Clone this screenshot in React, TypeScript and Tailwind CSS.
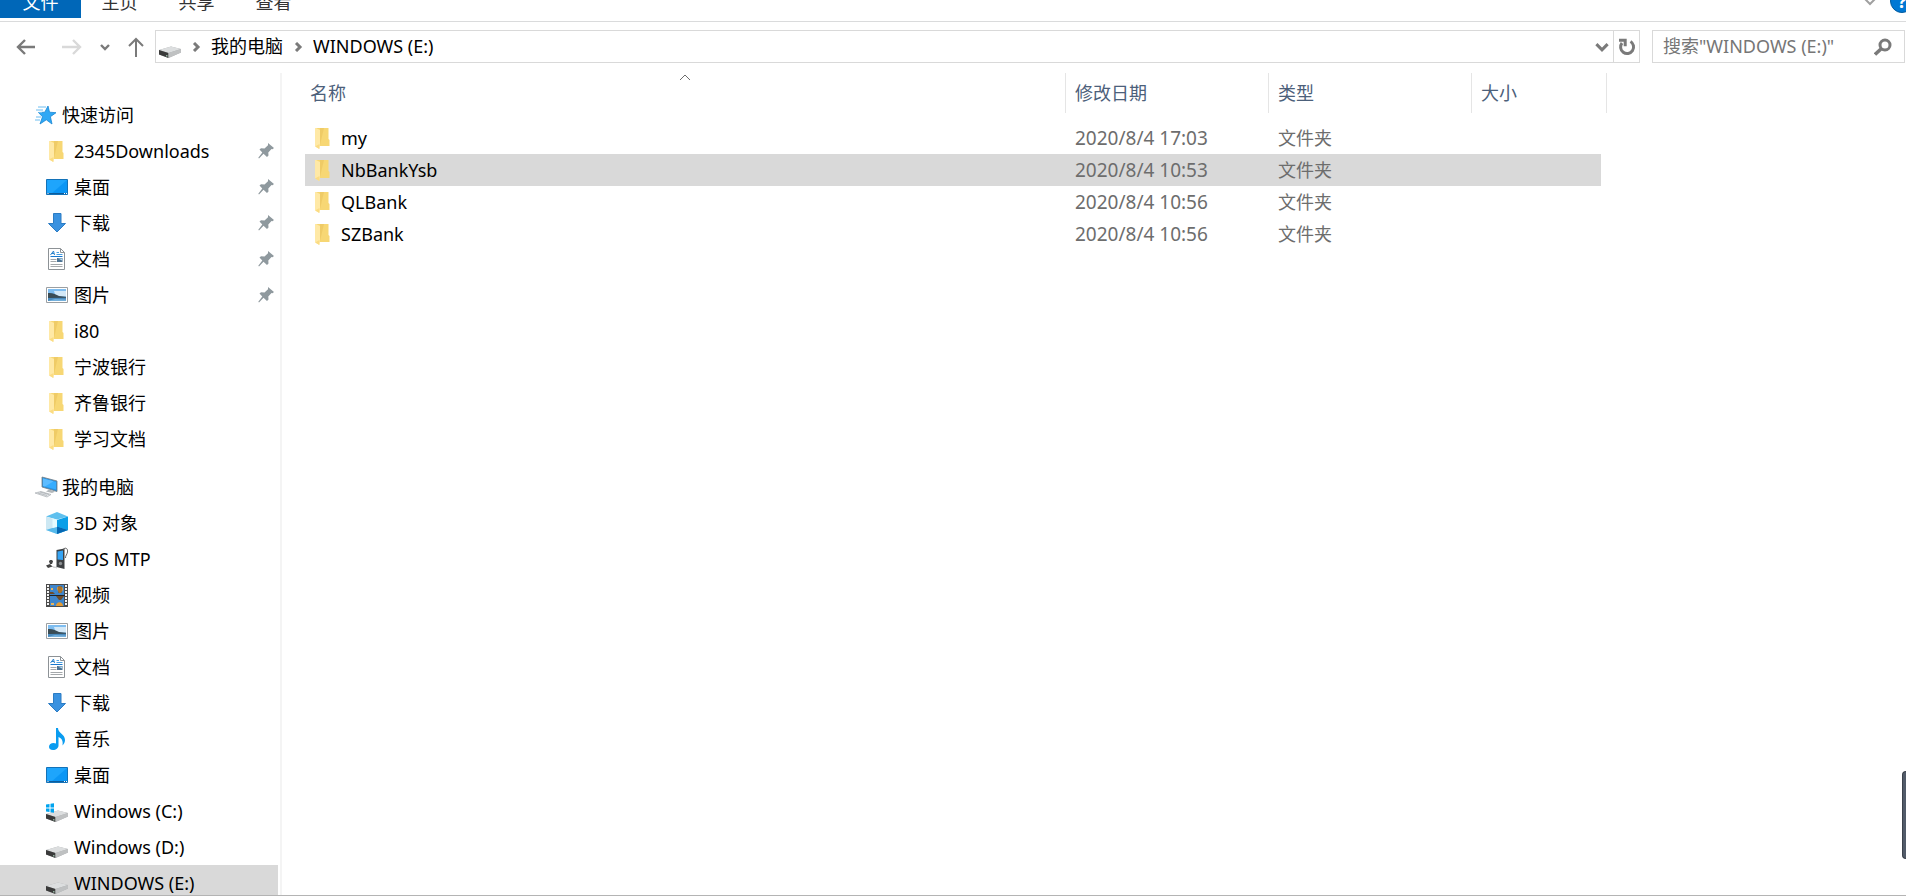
import type { ReactNode } from "react";

type IconName =
  | "star"
  | "folder"
  | "desktop"
  | "download"
  | "document"
  | "picture"
  | "computer"
  | "cube"
  | "player"
  | "video"
  | "music"
  | "drive"
  | "system";

type NavItem = { label: string; icon: IconName; pinned?: boolean; active?: boolean };
type NavGroup = { label: string; icon: IconName; items: NavItem[] };

const groups: NavGroup[] = [
  {
    label: "快速访问",
    icon: "star",
    items: [
      { label: "2345Downloads", icon: "folder", pinned: true },
      { label: "桌面", icon: "desktop", pinned: true },
      { label: "下载", icon: "download", pinned: true },
      { label: "文档", icon: "document", pinned: true },
      { label: "图片", icon: "picture", pinned: true },
      { label: "i80", icon: "folder" },
      { label: "宁波银行", icon: "folder" },
      { label: "齐鲁银行", icon: "folder" },
      { label: "学习文档", icon: "folder" },
    ],
  },
  {
    label: "我的电脑",
    icon: "computer",
    items: [
      { label: "3D 对象", icon: "cube" },
      { label: "POS MTP", icon: "player" },
      { label: "视频", icon: "video" },
      { label: "图片", icon: "picture" },
      { label: "文档", icon: "document" },
      { label: "下载", icon: "download" },
      { label: "音乐", icon: "music" },
      { label: "桌面", icon: "desktop" },
      { label: "Windows (C:)", icon: "system" },
      { label: "Windows (D:)", icon: "drive" },
      { label: "WINDOWS (E:)", icon: "drive", active: true },
    ],
  },
];

const files = [
  { name: "my", date: "2020/8/4 17:03", type: "文件夹" },
  { name: "NbBankYsb", date: "2020/8/4 10:53", type: "文件夹", selected: true },
  { name: "QLBank", date: "2020/8/4 10:56", type: "文件夹" },
  { name: "SZBank", date: "2020/8/4 10:56", type: "文件夹" },
];

const driveBody = (
  <>
    <path d="M0 14 12 10.5 22 13v3.500L9.500 22 0 18.500z" fill="#a9abad" />
    <path d="M0 14 12 10.500 22 13 9.500 17z" fill="#dcdedf" />
    <path d="M0 14 9.500 17v5L0 18.500z" fill="#3a3a3a" />
    <path d="M9.500 17 22 13v3.500L9.500 22z" fill="#bfc1c2" />
    <path d="M7 19h1.500v1.500H7z" fill="#8fae9b" />
  </>
);

// All drawn on a 22x22 grid
const shapes: Record<IconName, ReactNode> = {
  star: (
    <>
      <path
        d="m13 2 1.500 6.200 6.500.5-5.600 4 1.600 7.300-5.700-4.200-6.300 4.200 2.500-7.200-4-4.300 6.300-.3z"
        fill="#2fa8f5"
        stroke="#1685d3"
        strokeWidth=".8"
      />
      <path d="M3 3h8M1 6h7M4 8.500h3M1 13h5M0 16h5" stroke="#6dbdf0" strokeWidth="1" />
    </>
  ),
  folder: (
    <>
      <path d="M4 1h12.500v11l1 1v6H7z" fill="#f7d774" />
      <path d="M8 1h4l-4 17z" fill="#efcb66" />
      <path d="M3 1h1l4 2v15l-1 4-4-3z" fill="#ffe9a6" />
      <path d="M7.500 17v5L3 19.500z" fill="#fbdc83" />
    </>
  ),
  desktop: (
    <>
      <path d="M.5 3.500h21v15H.5z" fill="#1ea5fc" stroke="#1372b8" />
      <path d="M21 4v14H5z" fill="#0b96f5" />
      <path d="M1 17.500h20" stroke="#0c5c9c" />
      <path d="M1.500 17.500h1M18 17.500h1m1 0h1" stroke="#fff" />
    </>
  ),
  download: <path d="M7.500 1.500h7.500v10h4.500L11 20 2.500 11.500h5z" fill="#3a92e0" stroke="#2c7cc4" />,
  document: (
    <>
      <path d="M2.500.5h12l4 4v17h-16z" fill="#fff" stroke="#8d9296" />
      <path d="M14.500.5v4h4" fill="none" stroke="#8d9296" />
      <path d="m4.500 7 3-4 1 4M5.500 5.500H8" fill="none" stroke="#2b83cc" />
      <path d="M10.500 4.500h2.500M10.500 6.500h6" stroke="#4ba0e2" />
      <path d="M4.500 8.500h12" stroke="#1778cf" />
      <path d="M4.500 11.500h6m-6 2h6m-6 3h12m-12 2h12" stroke="#a4a8ab" />
      <path d="M11 10h5.500v4H11z" fill="#4d7393" />
      <path d="m12 10.500 4 2v-2z" fill="#b5dcf5" />
    </>
  ),
  picture: (
    <>
      <path d="M.5 3.500h21v15H.5z" fill="#fff" stroke="#9b9fa2" />
      <path d="M2 5h18v8H2z" fill="#7ebdf0" />
      <path d="M8 7h12v6H10z" fill="#d3e8f7" />
      <path d="M2 12.500h18V17H2z" fill="#4a8abd" />
      <path d="M2 9c4-.5 8 1 11 3l7 1v.8L2 14z" fill="#3a4c55" />
      <path d="m2 17 7-2 11 .5V17z" fill="#74b0dc" />
    </>
  ),
  computer: (
    <>
      <path d="m7 1 15 4v10.500L7 11z" fill="#2b91de" stroke="#727b82" strokeWidth=".8" />
      <path d="m8 2.500 13 3.500v7.500L8 10z" fill="#36adff" />
      <path d="M8 2.500 18.500 5.300 10 10.500 8 10z" fill="#5dbcff" />
      <path d="m14 13.500 4 1.200 2 1-3 1.300-6-1.500z" fill="#b3b8bb" />
      <path d="m0 17 6-1.500L16 18.500l-4 2.500z" fill="#e3e6e8" stroke="#9fa5a9" strokeWidth=".6" />
      <path d="m3 17 9 2.500M5 16l9 2.500" stroke="#9fa5a9" strokeWidth=".6" />
    </>
  ),
  cube: (
    <>
      <path d="m0 4.500 11-4.500 11 4.500-11 3z" fill="#5fc0ee" />
      <path d="M0 4.500 11 8v14L0 18z" fill="#cde8f3" />
      <path d="M22 4.500 11 8v14l11-4z" fill="#0b9fe8" />
      <path d="m0 18 11-3.500L22 18l-11 4z" fill="#55b9eb" />
      <path d="M11 14.500 22 18l-11 4z" fill="#0568b3" />
      <path d="M6.500 6.500 11 8v7l-4.500 1z" fill="#e4fbff" />
    </>
  ),
  player: (
    <>
      <path d="m10.500 2 8-1.500V21l-8-2z" fill="#3d4043" />
      <path d="m11.500 3.500 5.500-1V12l-5.500-.5z" fill="#36a4f4" />
      <circle cx="14.500" cy="15.500" r="1.700" fill="#8b8f92" />
      <path d="M17 1.500c3-3 5-.5 4.500 2.500S19.500 7 19.500 10" fill="none" stroke="#666" />
      <path d="M0 17.500 4 16l2.500 2.500L2 20zM3 13.500c0-2 4-2 4 0l-1 2.500H4z" fill="#444" />
      <path d="M6 18c1 2 3 .5 5 2" fill="none" stroke="#bbb" />
    </>
  ),
  video: (
    <>
      <path d="M0 0h22v23H0z" fill="#4b4b4b" />
      <path d="M4 1h14v10H4zM4 12h14v10H4z" fill="#3f86cc" />
      <path d="M2 1v21M20 1v21" stroke="#f5f5f5" strokeWidth="2" strokeDasharray="2 1" />
      <path d="M11 4c1-3 6-2 6 1 0 2-2 3-2 4h-2c0-1-2-3-2-5z" fill="#e49b34" />
      <path d="M13 2v7M15 2v7" stroke="#593717" strokeWidth=".8" />
      <path d="M4 8h3l2 2H4zM10 12h8l-3 4h-2z" fill="#6d4b2a" />
      <path d="M10 22c0-5 7-5 7 0z" fill="#e49b34" />
      <path d="M5 4h2v2H5zM5 19h3v2H5z" fill="#e8b45c" />
      <path d="M3 11.500h16" stroke="#222" />
    </>
  ),
  music: (
    <path
      d="M10 0h2c0 5 7 6 7 12 0 2-1 4-2.500 5.500C17.500 12 15 10 12.500 9v8.500C12.500 20 10 22 7 22s-4-1.500-4-3.300C3 16.500 5 15 7.500 15c1 0 1.800.2 2.500.5z"
      fill="#0a9cf0"
    />
  ),
  drive: driveBody,
  system: (
    <>
      {driveBody}
      <path d="M0 4.500 3.500 4v3.500H0zM4.500 3.800 8 3.300v4.200H4.500zM0 8.500h3.500V12L0 11.500zM4.500 8.500H8v4.200l-3.500-.5z" fill="#00a4ef" />
    </>
  ),
};

function Icon({ name }: { name: IconName }) {
  return (
    <svg viewBox="0 0 22 22" className="size-[22px] shrink-0 overflow-visible" aria-hidden>
      {shapes[name]}
    </svg>
  );
}

function Pin() {
  return (
    <svg viewBox="0 0 16 16" className="size-4 shrink-0" fill="#8f999e" aria-hidden>
      <path d="m10 0 6 5-1.500 1.300-1-.3-3.200 3.500.2 3-1.500 1.500-3.500-3.300L1 15.500l-.7-.8 4-5.300L1.500 6.500 3 5.300l3.500.2 3.500-3.200z" />
    </svg>
  );
}

function Chevron({ className, d = "m2 1 4 4-4 4", width = 3 }: { className: string; d?: string; width?: number }) {
  return (
    <svg viewBox="0 0 10 10" className={className} fill="none" stroke="currentColor" strokeWidth={width} aria-hidden>
      <path d={d} />
    </svg>
  );
}

function Ribbon() {
  return (
    <div className="flex h-[22px] shrink-0 items-end justify-between overflow-hidden border-b border-[#dadbdc] pb-[3px]">
      <div className="flex text-[#333]">
        <button className="h-8 w-[81px] bg-[#0067b8] text-white">文件</button>
        <button className="h-8 w-[77px]">主页</button>
        <button className="h-8 w-[77px]">共享</button>
        <button className="h-8 w-[77px]">查看</button>
      </div>
      <div className="-mr-2 flex h-[34px] items-center gap-3">
        <button aria-label="展开功能区">
          <svg viewBox="0 0 16 10" className="h-2.5 w-4" fill="none" stroke="#a0a0a0" strokeWidth="2" aria-hidden>
            <path d="m1 1 7 7 7-7" />
          </svg>
        </button>
        <button aria-label="帮助" className="size-6 rounded-full border border-[#005a9e] bg-[#0078d4] font-bold leading-5 text-white">
          ?
        </button>
      </div>
    </div>
  );
}

function AddressBar() {
  return (
    <div className="flex h-[51px] shrink-0 items-start pt-2 pr-px text-[#7a7a7a]">
      <div className="flex h-[33px] w-[155px] shrink-0 items-center pl-4">
        <button aria-label="后退">
          <svg viewBox="0 0 20 16" className="h-4 w-5" fill="none" stroke="#7a7a7a" strokeWidth="2.400" aria-hidden>
            <path d="M19 8H2m7-7L2 8l7 7" />
          </svg>
        </button>
        <button aria-label="前进" className="ml-[26px]">
          <svg viewBox="0 0 20 16" className="h-4 w-5" fill="none" stroke="#d9d9d9" strokeWidth="2.400" aria-hidden>
            <path d="M0 8h18m-7-7 7 7-7 7" />
          </svg>
        </button>
        <button aria-label="最近浏览的位置" className="ml-[18px]">
          <Chevron className="size-2.5" d="m1 3 4 4 4-4" width={2.4} />
        </button>
        <button aria-label="上移" className="ml-[17px]">
          <svg viewBox="0 0 18 20" className="h-5 w-[18px]" fill="none" stroke="#7a7a7a" strokeWidth="2" aria-hidden>
            <path d="M9 20V2M2 9l7-7 7 7" />
          </svg>
        </button>
      </div>
      <div className="flex h-[33px] min-w-0 flex-1 items-center border border-[#d9d9d9] pl-[3px]">
        <Icon name="drive" />
        <Chevron className="ml-[11px] size-2.5" />
        <button className="ml-[9px] pb-0.5 text-black">我的电脑</button>
        <Chevron className="ml-[11px] size-2.5" />
        <button className="ml-[9px] pb-0.5 text-black">WINDOWS (E:)</button>
        <button aria-label="以前的位置" className="mr-1 ml-auto">
          <Chevron className="size-3.5" d="m1 3 4 4 4-4" width={2.2} />
        </button>
        <button aria-label="刷新" className="flex h-full w-[26px] items-center justify-center border-l border-[#d9d9d9]">
          <svg viewBox="0 0 18 18" className="size-[18px]" fill="none" stroke="#7a7a7a" strokeWidth="3" aria-hidden>
            <path d="M12.500 3.500A6.500 6.500 0 1 1 4 5" />
            <path d="M1 2.300h6.200v6" />
          </svg>
        </button>
      </div>
      <label className="ml-3 flex h-[33px] w-[253px] items-center border border-[#d9d9d9] pr-3 pl-2.5">
        <input
          type="search"
          aria-label="搜索"
          placeholder={'搜索"WINDOWS (E:)"'}
          className="min-w-0 flex-1 pb-0.5 outline-none placeholder:text-[#767676]"
        />
        <svg viewBox="0 0 18 18" className="size-[18px]" fill="none" stroke="#7a7a7a" strokeWidth="3" aria-hidden>
          <circle cx="11" cy="7" r="5" />
          <path d="m7.500 10.500-6.500 6" strokeWidth="3.500" />
        </svg>
      </label>
    </div>
  );
}

function Sidebar() {
  return (
    <nav className="flex w-[282px] shrink-0 flex-col gap-3 overflow-hidden border-r-2 border-[#f4f4f4] pt-6 pr-0.5">
      {groups.map((group) => (
        <div key={group.label}>
          <a href="#" className="flex h-9 items-center gap-[5px] pl-[35px]">
            <Icon name={group.icon} />
            {group.label}
          </a>
          <ul>
            {group.items.map((item) => (
              <li key={item.label}>
                <a
                  href="#"
                  className={`flex h-9 items-center gap-1.5 pr-1 pl-[46px] ${item.active ? "bg-[#d9d9d9]" : ""}`}
                >
                  <Icon name={item.icon} />
                  <span className="flex-1">{item.label}</span>
                  {item.pinned && <Pin />}
                </a>
              </li>
            ))}
          </ul>
        </div>
      ))}
    </nav>
  );
}

function FileTable() {
  return (
    <main className="min-w-0 flex-1 overflow-hidden pl-[23px]">
      <table className="w-[1302px] table-fixed border-separate border-spacing-0 text-left">
        <colgroup>
          <col />
          <col className="w-[203px]" />
          <col className="w-[203px]" />
          <col className="w-[130px]" />
          <col className="w-[6px]" />
        </colgroup>
        <thead className="text-[#4c607a]">
          <tr className="h-10">
            <th className="relative pl-[5px] font-normal">
              名称
              <svg
                viewBox="0 0 12 8"
                className="absolute top-0 left-1/2 h-2 w-3 -translate-x-1/2"
                fill="none"
                stroke="#6d6d6d"
                aria-hidden
              >
                <path d="m1 7 5-5 5 5" />
              </svg>
            </th>
            <th className="border-l border-[#e5e5e5] pl-[9px] font-normal">修改日期</th>
            <th className="border-l border-[#e5e5e5] pl-[9px] font-normal">类型</th>
            <th colSpan={2} className="border-x border-[#e5e5e5] pl-[9px] font-normal">
              大小
            </th>
          </tr>
        </thead>
        <tbody className="before:block before:h-[9px]">
          {files.map((file) => (
            <tr key={file.name} className="h-8 text-[#6d6d6d]">
              <td className={`pl-[7px] text-black ${file.selected ? "bg-[#d9d9d9]" : ""}`}>
                <div className="flex items-center gap-[7px]">
                  <Icon name="folder" />
                  {file.name}
                </div>
              </td>
              <td className={`pl-2.5 text-[19px] ${file.selected ? "bg-[#d9d9d9]" : ""}`}>{file.date}</td>
              <td className={`pl-2.5 ${file.selected ? "bg-[#d9d9d9]" : ""}`}>{file.type}</td>
              <td className={file.selected ? "bg-[#d9d9d9]" : ""} />
              <td />
            </tr>
          ))}
        </tbody>
      </table>
    </main>
  );
}

export default function App() {
  return (
    <div className="relative flex h-screen flex-col overflow-hidden border-b border-[#b4b4b4] bg-white font-['Noto_Sans','Noto_Sans_CJK_SC',sans-serif] text-[18px] leading-6 text-black">
      <Ribbon />
      <AddressBar />
      <div className="flex min-h-0 flex-1">
        <Sidebar />
        <FileTable />
      </div>
      {/* Handle of the docked side panel */}
      <div className="absolute right-0 bottom-9 h-[88px] w-1 rounded-l border border-r-0 border-[#3b414b] bg-[#525b69]" />
    </div>
  );
}
